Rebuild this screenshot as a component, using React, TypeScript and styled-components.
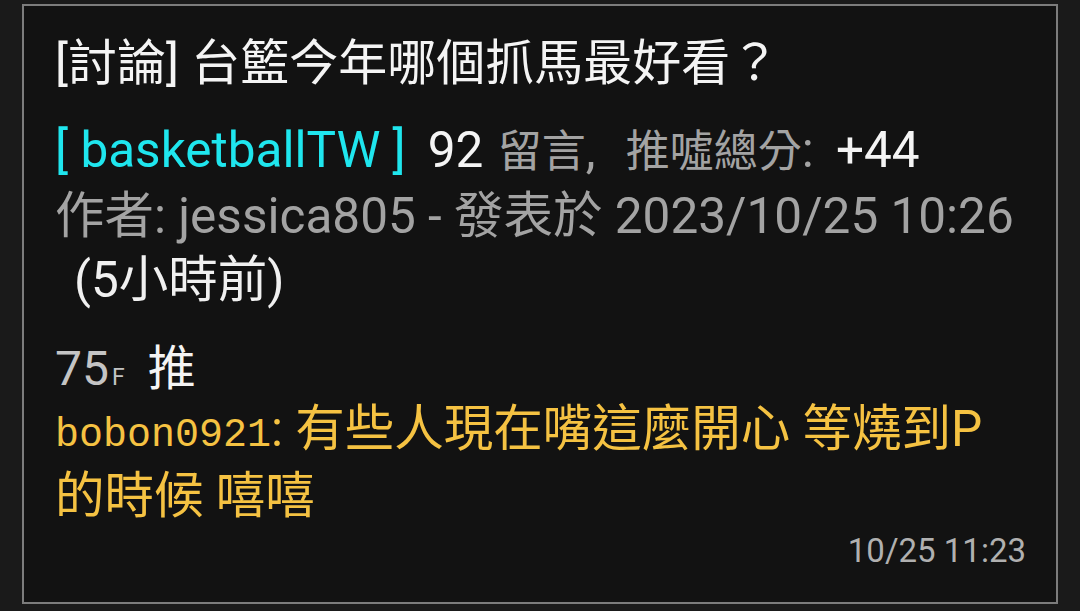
import React from 'react';
import styled, { createGlobalStyle } from 'styled-components';

const GlobalStyle = createGlobalStyle`
  html, body {
    margin: 0;
    padding: 0;
    background: #1a1a1a;
  }
  body {
    font-family: Roboto, "Noto Sans CJK TC", sans-serif;
  }
`;

const Page = styled.div`
  width: 1080px;
  height: 611px;
  box-sizing: border-box;
  padding: 4px 22px 7px 22px;
  background: #1a1a1a;
`;

const Card = styled.div`
  height: 100%;
  box-sizing: border-box;
  border: 2px solid #7c7c7c;
  background: #121212;
  padding: 27px 30px 0 31px;
  display: flex;
  flex-direction: column;
`;

const Title = styled.div`
  font-size: 49px;
  line-height: 62px;
  color: #f4f4f4;
  margin-bottom: 23px;
  white-space: nowrap;
`;

const MetaLine = styled.div<{ indent?: number }>`
  font-size: 49.5px;
  line-height: 64px;
  color: #a3a3a3;
  white-space: nowrap;
  padding-left: ${(p) => p.indent ?? 0}px;
`;

const Board = styled.span`
  color: #1fe6ee;
  margin-right: 22px;
`;

const Bright = styled.span<{ lead?: number }>`
  color: #f4f4f4;
  margin-left: ${(p) => p.lead ?? 0}px;
`;

const Narrow = styled.span<{ lead?: number }>`
  font-size: 44px;
  margin-left: ${(p) => p.lead ?? 0}px;
`;

const Ago = styled.span`
  color: #f0f0f0;
`;

const FloorRow = styled.div`
  margin-top: 25px;
  display: flex;
  align-items: baseline;
  font-size: 48px;
  line-height: 64px;
`;

const FloorNum = styled.span`
  color: #c4c4c4;
`;

const FloorMark = styled.span`
  font-size: 23px;
  line-height: 23px;
  color: #c4c4c4;
  margin-left: 3px;
`;

const PushTag = styled.span`
  color: #f4f4f4;
  margin-left: 23px;
`;

const Comment = styled.div`
  font-size: 49.5px;
  line-height: 67px;
  color: #f5c242;
  margin-top: -5px;
`;

const UserId = styled.span`
  font-family: "Liberation Mono", "Courier New", monospace;
  font-size: 40px;
  line-height: 40px;
`;

const Stamp = styled.div`
  align-self: flex-end;
  font-size: 33px;
  line-height: 44px;
  color: #b0b0b0;
  margin-top: -1px;
`;

export default function App() {
  return (
    <Page>
      <GlobalStyle />
      <Card>
        <Title>[討論] 台籃今年哪個抓馬最好看？</Title>
        <MetaLine>
          <Board>[ basketballTW ]</Board>
          <Bright>92</Bright> <Narrow lead={2}>留言</Narrow>, <Narrow lead={18}>推噓總分</Narrow>:{' '}
          <Bright lead={10}>+44</Bright>
        </MetaLine>
        <MetaLine>作者: jessica805 - 發表於 2023/10/25 10:26</MetaLine>
        <MetaLine indent={19}>
          <Ago>(5小時前)</Ago>
        </MetaLine>
        <FloorRow>
          <FloorNum>75</FloorNum>
          <FloorMark>F</FloorMark>
          <PushTag>推</PushTag>
        </FloorRow>
        <Comment>
          <UserId>bobon0921</UserId>: 有些人現在嘴這麼開心 等燒到P<wbr />的時候 嘻嘻
        </Comment>
        <Stamp>10/25 11:23</Stamp>
      </Card>
    </Page>
  );
}
